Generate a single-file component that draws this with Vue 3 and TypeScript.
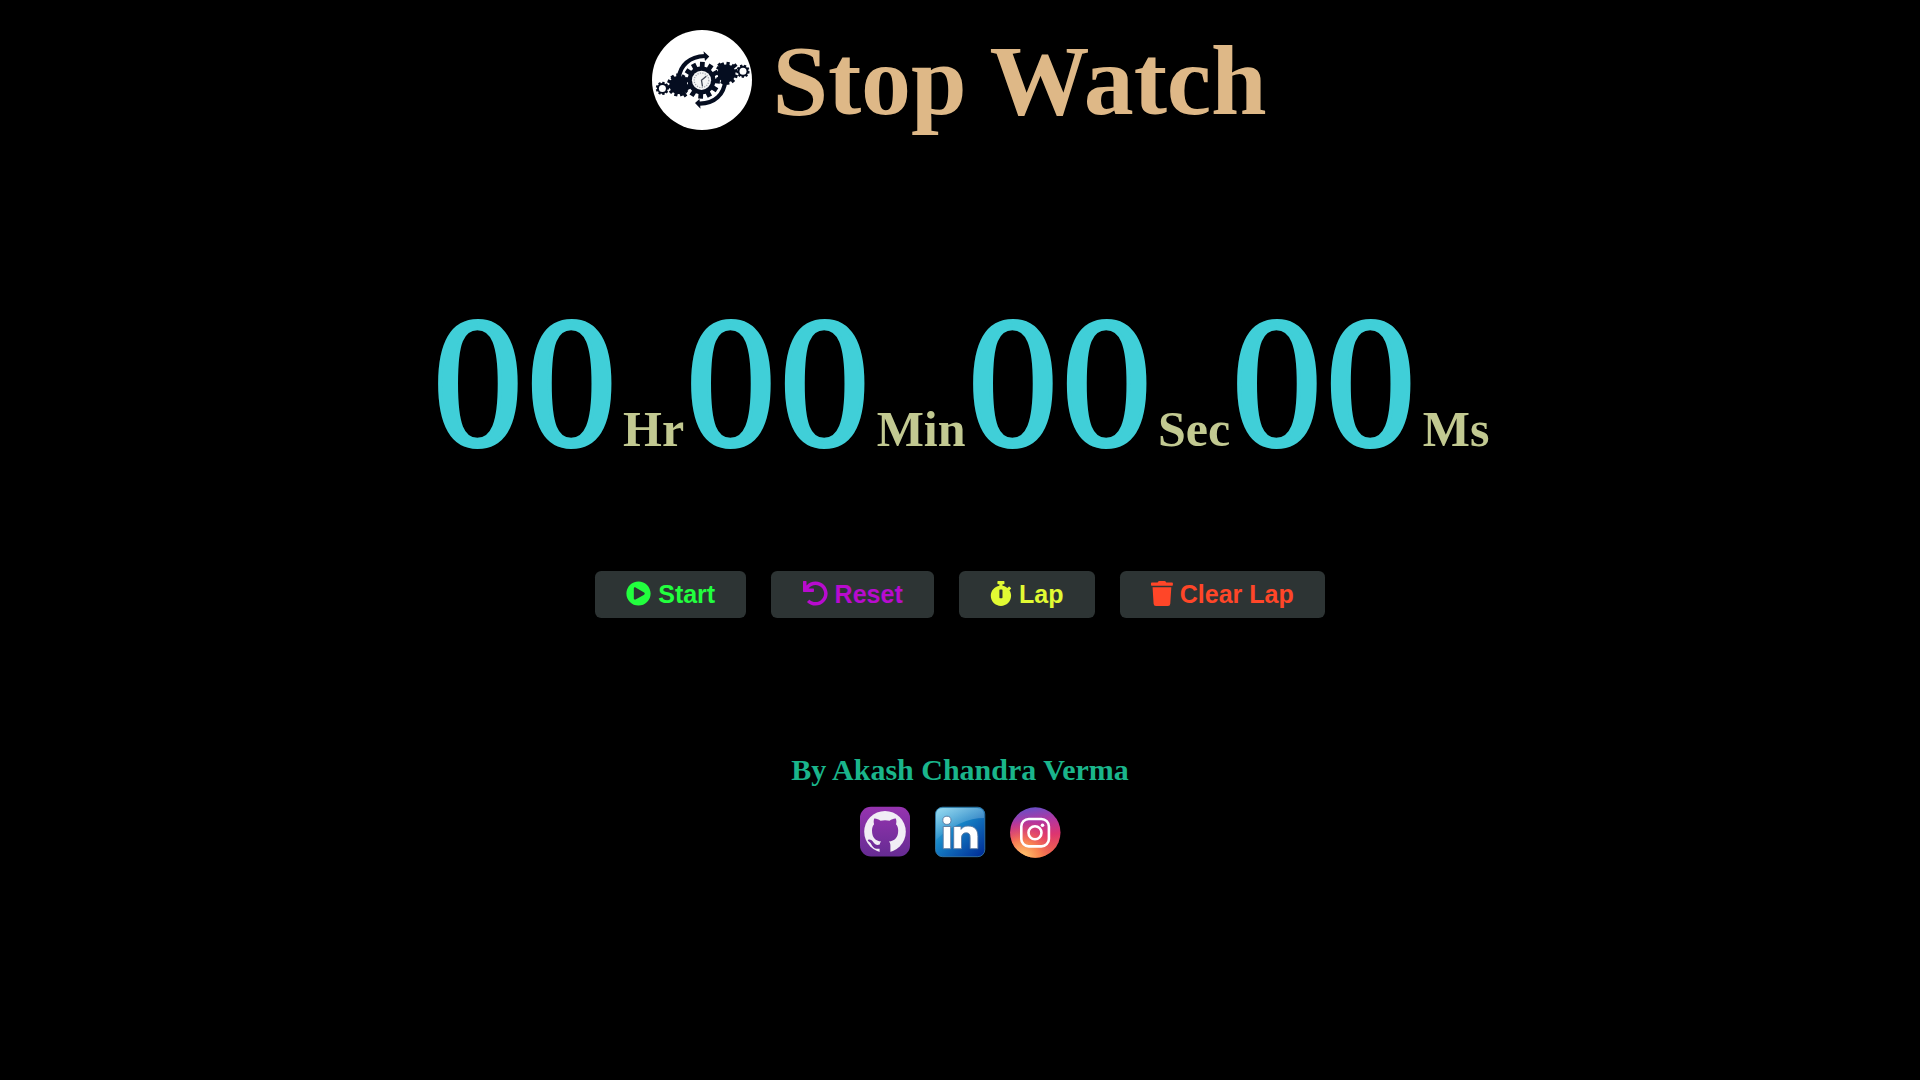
<script setup lang="ts">
import { computed, onBeforeUnmount, ref } from 'vue'

interface Action {
  id: string
  label: string
  color: string
  width: number
  path: string
  run: () => void
}

const elapsed = ref(0)
const laps = ref<string[]>([])
let timer: number | undefined

const pad = (n: number): string => String(n).padStart(2, '0')

const units = computed(() => [
  { name: 'Hr', value: pad(Math.floor(elapsed.value / 360000)) },
  { name: 'Min', value: pad(Math.floor(elapsed.value / 6000) % 60) },
  { name: 'Sec', value: pad(Math.floor(elapsed.value / 100) % 60) },
  { name: 'Ms', value: pad(elapsed.value % 100) },
])

function stop(): void {
  window.clearInterval(timer)
  timer = undefined
}

function toggle(): void {
  if (timer !== undefined) stop()
  else timer = window.setInterval(() => elapsed.value++, 10)
}

function reset(): void {
  stop()
  elapsed.value = 0
}

onBeforeUnmount(stop)

const actions: Action[] = [
  {
    id: 'start',
    label: 'Start',
    color: '#22ff3e',
    width: 512,
    path: 'M256 8C119 8 8 119 8 256s111 248 248 248 248-111 248-248S393 8 256 8zm115.700 272l-176 101c-15.800 8.800-35.700-2.500-35.700-21V152c0-18.400 19.800-29.800 35.700-21l176 107c16.400 9.200 16.400 32.900 0 42z',
    run: toggle,
  },
  {
    id: 'reset',
    label: 'Reset',
    color: '#b80bcf',
    width: 512,
    path: 'M212.333 224.333H12c-6.627 0-12-5.373-12-12V12C0 5.373 5.373 0 12 0h48c6.627 0 12 5.373 12 12v78.112C117.773 39.279 184.260 7.470 258.175 8.007c136.906.994 246.448 111.623 246.157 248.532C504.041 393.258 393.120 504 256.333 504c-64.089 0-122.496-24.313-166.510-64.215-5.099-4.622-5.334-12.554-.467-17.420l33.967-33.967c4.474-4.474 11.662-4.717 16.401-.525C170.760 415.336 211.580 432 256.333 432c97.268 0 176-78.716 176-176 0-97.267-78.716-176-176-176-58.496 0-110.280 28.476-142.274 72.333h98.274c6.627 0 12 5.373 12 12v48c0 6.627-5.373 12-12 12z',
    run: reset,
  },
  {
    id: 'lap',
    label: 'Lap',
    color: '#e1fa33',
    width: 448,
    path: 'M432 304c0 114.900-93.100 208-208 208S16 418.900 16 304c0-104 76.300-190.200 176-205.500V64h-28c-6.600 0-12-5.400-12-12V12c0-6.600 5.400-12 12-12h120c6.600 0 12 5.400 12 12v40c0 6.600-5.400 12-12 12h-28v34.500c37.500 5.800 71.700 21.600 99.700 44.600l27.500-27.500c4.700-4.700 12.300-4.700 17 0l28.300 28.300c4.700 4.700 4.700 12.300 0 17l-29.400 29.400-.6.6C419.700 223.300 432 262.200 432 304zm-176 36V188.500c0-6.600-5.400-12-12-12h-40c-6.600 0-12 5.400-12 12V340c0 6.600 5.400 12 12 12h40c6.600 0 12-5.400 12-12z',
    run: () => laps.value.push(units.value.map((u) => u.value).join(':')),
  },
  {
    id: 'clear',
    label: 'Clear Lap',
    color: '#ff4628',
    width: 448,
    path: 'M432 32H312l-9.400-18.700A24 24 0 0 0 281.100 0H166.800a23.720 23.720 0 0 0-21.400 13.300L136 32H16A16 16 0 0 0 0 48v32a16 16 0 0 0 16 16h416a16 16 0 0 0 16-16V48a16 16 0 0 0-16-16zM53.200 467a48 48 0 0 0 47.900 45h245.800a48 48 0 0 0 47.900-45L416 128H32z',
    run: () => (laps.value = []),
  },
]

// Outline of a toothed wheel around (cx, cy).
function gear(cx: number, cy: number, outer: number, root: number, teeth: number, turn = 0): string {
  const step = (Math.PI * 2) / teeth
  const points: string[] = []
  for (let i = 0; i < teeth; i++) {
    const a = i * step + turn
    for (const [r, o] of [[root, -0.32], [outer, -0.25], [outer, 0.25], [root, 0.32]]) {
      points.push(`${(cx + r * Math.cos(a + o * step)).toFixed(2)} ${(cy + r * Math.sin(a + o * step)).toFixed(2)}`)
    }
  }
  return `M${points.join('L')}Z`
}

const wheels = [
  gear(49.5, 50.3, 18.6, 14, 12, 0.05),
  gear(26.3, 55, 11.6, 9, 11, 0.1),
  gear(74.5, 43.4, 11.6, 9, 11, 0.3),
  gear(10.4, 58.4, 6.7, 5.4, 9),
  gear(91, 41.2, 6.7, 5.4, 9, 0.2),
]
</script>

<template>
  <main class="page">
    <header class="title">
      <svg class="logo" viewBox="0 0 100 100" aria-hidden="true">
        <circle cx="50" cy="50" r="50" fill="#fff" />
        <g fill="#050d20">
          <path v-for="d in wheels" :key="d" :d="d" />
          <path d="M57.300 26.500 51.500 21.300 53 31ZM43 73 48.500 78.800 47.500 69Z" />
        </g>
        <g fill="none" stroke="#050d20" stroke-width="4.200">
          <path d="M27 47.500C28 36 37 26.500 53 26" />
          <path d="M73.300 51C72 64 63 74 47 73.600" />
          <path d="M31 62 34 66.500M66.500 33.500 70 38M19.500 47 24 51M84.500 34.500 79 39" stroke-width="3.200" />
        </g>
        <circle cx="10.400" cy="58.400" r="3.500" fill="#fff" />
        <circle cx="91" cy="41.200" r="3.500" fill="#fff" />
        <circle cx="49.500" cy="50.300" r="9.600" fill="#f4f5f6" />
        <circle cx="49.500" cy="50.300" r="7.300" fill="none" stroke="#9da2aa" stroke-width="1.200" stroke-dasharray="1.200 1.300" />
        <path d="M54.300 46.300 49.500 50.300 50.500 56.500" fill="none" stroke="#3f4654" stroke-width="1.300" />
      </svg>
      <h1>Stop Watch</h1>
    </header>

    <section class="clock">
      <div v-for="unit in units" :key="unit.name" class="unit">
        <span class="digits">{{ unit.value }}</span><span class="name">{{ unit.name }}</span>
      </div>
    </section>

    <section class="actions">
      <button v-for="a in actions" :key="a.id" type="button" :style="{ color: a.color }" @click="a.run">
        <svg :viewBox="`0 0 ${a.width} 512`" :style="{ width: `${(a.width / 512) * 25}px` }"><path :d="a.path" /></svg>
        <span>{{ a.label }}</span>
      </button>
    </section>

    <ul v-if="laps.length" class="laps">
      <li v-for="(lap, i) in laps" :key="i">{{ lap }}</li>
    </ul>

    <footer class="credits">
      <h2>By Akash Chandra Verma</h2>
      <nav class="social">
        <a href="#" aria-label="GitHub">
          <svg viewBox="0 0 50 50">
            <defs>
              <linearGradient id="gh" gradientUnits="userSpaceOnUse" x1="0" y1="0" x2="0" y2="50">
                <stop offset="0" stop-color="#9634b0" />
                <stop offset="1" stop-color="#652b92" />
              </linearGradient>
            </defs>
            <rect y="-0.300" width="50" height="49.800" rx="11" fill="url(#gh)" />
            <circle cx="25" cy="24.700" r="20.800" fill="#f1edf5" />
            <path
              fill="url(#gh)"
              d="M14.200 11.600c2-.3 4.300.8 6.300 2.200 2.900-.7 6.200-.7 9.100 0 2-1.400 4.300-2.500 6.200-2.200.8 2.200.7 4.100.2 5.700 1.500 1.700 2.200 3.800 2.200 6.200 0 7.500-3.700 10.300-9.300 11.100 1 1 1.500 2.400 1.500 4.200V46H19.600v-4.300c-3.600.6-5.700-.5-7.300-2.800-1-1.500-1.800-3.600-3.900-4.600-1-.5-.6-1.600.5-1.700 2.100-.1 3.500 1.200 4.700 2.900 1.500 2.200 3.200 2.900 6.100 2.100.1-1.200.6-2.200 1.500-3-5.600-.8-9.200-3.600-9.200-11.100 0-2.400.7-4.500 2.100-6.200-.5-1.600-.6-3.500.1-5.700Z"
            />
          </svg>
        </a>
        <a href="#" aria-label="LinkedIn">
          <svg viewBox="0 0 50 50">
            <defs>
              <linearGradient id="li" x1="0" y1="0" x2="0.900" y2="1">
                <stop offset="0" stop-color="#55c4e8" />
                <stop offset="0.450" stop-color="#1683c6" />
                <stop offset="1" stop-color="#002f98" />
              </linearGradient>
              <linearGradient id="shine" x1="0" y1="0" x2="0.300" y2="1">
                <stop offset="0" stop-color="#fff" stop-opacity="0.400" />
                <stop offset="1" stop-color="#fff" stop-opacity="0.030" />
              </linearGradient>
            </defs>
            <rect x="0.500" y="0.200" width="49.300" height="49.500" rx="7" fill="url(#li)" stroke="#397eac" stroke-width="0.800" />
            <path d="M1 8Q1 1 8 1H42Q49 1 49 8V11C34 11 16 18 1 33Z" fill="url(#shine)" />
            <g fill="#fff" stroke="#5878a0" stroke-width="0.900">
              <circle cx="11.900" cy="13.300" r="4.100" />
              <path d="M8.200 19.500h7.500v22.200H8.200ZM18.700 19.500h7.300v2.900c1.400-2.100 3.600-3.400 7-3.400 6.600 0 9.900 3.600 9.900 10.400v12.300h-7.800V30.500c0-3.200-1-4.700-3.900-4.700-3.100 0-4.700 2-4.700 5.200v10.700h-7.800Z" />
            </g>
          </svg>
        </a>
        <a href="#" aria-label="Instagram">
          <svg viewBox="0 0 50 50">
            <defs>
              <linearGradient id="ig" x1="0.350" y1="0" x2="0.500" y2="1">
                <stop offset="0" stop-color="#6650c8" />
                <stop offset="0.300" stop-color="#b336a0" />
                <stop offset="0.600" stop-color="#de356f" />
                <stop offset="1" stop-color="#ed7048" />
              </linearGradient>
              <radialGradient id="glow" cx="0.250" cy="1" r="0.750">
                <stop offset="0" stop-color="#ffcf72" />
                <stop offset="0.450" stop-color="#fb8b50" stop-opacity="0.850" />
                <stop offset="1" stop-color="#e93b60" stop-opacity="0" />
              </radialGradient>
            </defs>
            <circle cx="25.300" cy="25.500" r="25.200" fill="url(#ig)" />
            <circle cx="25.300" cy="25.500" r="25.200" fill="url(#glow)" />
            <g fill="none" stroke="#fff" stroke-width="2.600">
              <rect x="11.300" y="12" width="27.600" height="27.400" rx="7.500" />
              <circle cx="25" cy="25.700" r="6.500" />
            </g>
            <circle cx="32.500" cy="18.300" r="1.800" fill="#fff" />
          </svg>
        </a>
      </nav>
    </footer>
  </main>
</template>

<style>
body {
  margin: 0;
  background: #000;
}
</style>

<style scoped>
.page {
  display: flex;
  flex-direction: column;
  align-items: center;
  min-height: 1080px;
  background: #000;
  font-family: 'Liberation Serif', 'Times New Roman', serif;
}

.title {
  display: flex;
  align-items: center;
  gap: 20.500px;
  height: 100px;
  margin-top: 30px;
  padding-right: 1.500px;
}

.logo {
  width: 100px;
  height: 100px;
}

h1 {
  margin: 0;
  padding-top: 2px;
  color: burlywood;
  font-size: 100px;
  line-height: 100px;
  letter-spacing: -0.150px;
}

.clock {
  display: flex;
  height: 210px;
  margin-top: 148px;
}

.unit {
  line-height: 210px;
  white-space: nowrap;
}

.digits {
  display: inline-block;
  width: 187.500px;
  color: #40cfd8;
  font-size: 186px;
  letter-spacing: 4.660px;
  -webkit-text-stroke: 4px #40cfd8;
  transform: translate(2.200px, -1px) scaleX(0.960);
  transform-origin: left;
}

.name {
  margin-left: 5px;
  color: #c2c991;
  font-size: 50px;
  font-weight: bold;
}

.actions {
  display: flex;
  gap: 25px;
  margin-top: 83px;
}

button {
  display: flex;
  align-items: center;
  gap: 6.950px;
  height: 47px;
  padding: 0 31.250px 2px;
  border: 0;
  border-radius: 6.250px;
  background: #2d3434;
  font: bold 25px/28px 'Liberation Sans', Arial, sans-serif;
  cursor: pointer;
}

button svg {
  height: 25px;
  fill: currentColor;
}

.laps {
  margin: 25px 0 0;
  padding: 0;
  color: #c2c991;
  font-size: 25px;
  list-style: none;
}

.credits {
  display: flex;
  flex-direction: column;
  align-items: center;
  margin-top: 135px;
}

h2 {
  margin: 0;
  color: #1ab58b;
  font-size: 30px;
  line-height: 34px;
}

.social {
  display: flex;
  gap: 25px;
  margin-top: 20px;
}

.social a,
.social svg {
  display: block;
  width: 50px;
  height: 50px;
  overflow: visible;
}
</style>
